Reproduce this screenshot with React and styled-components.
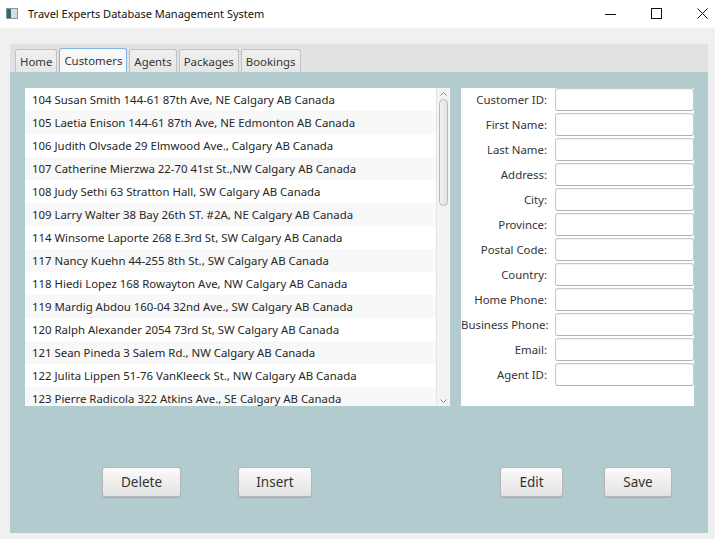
import React from 'react'
import styled, { createGlobalStyle } from 'styled-components'

const GlobalStyle = createGlobalStyle`
  html, body {
    margin: 0;
    padding: 0;
    background: #f0f0f0;
    font-family: 'Noto Sans', 'Open Sans', sans-serif;
    color: #333;
  }
`

const customers = [
  '104 Susan Smith 144-61 87th Ave, NE Calgary AB Canada',
  '105 Laetia Enison 144-61 87th Ave, NE Edmonton AB Canada',
  '106 Judith Olvsade 29 Elmwood Ave., Calgary AB Canada',
  '107 Catherine Mierzwa 22-70 41st St.,NW Calgary AB Canada',
  '108 Judy Sethi 63 Stratton Hall, SW Calgary AB Canada',
  '109 Larry Walter 38 Bay 26th ST. #2A, NE Calgary AB Canada',
  '114 Winsome Laporte 268 E.3rd St, SW Calgary AB Canada',
  '117 Nancy Kuehn 44-255 8th St., SW Calgary AB Canada',
  '118 Hiedi Lopez 168 Rowayton Ave, NW Calgary AB Canada',
  '119 Mardig Abdou 160-04 32nd Ave., SW Calgary AB Canada',
  '120 Ralph Alexander 2054 73rd St, SW Calgary AB Canada',
  '121 Sean Pineda 3 Salem Rd., NW Calgary AB Canada',
  '122 Julita Lippen 51-76 VanKleeck St., NW Calgary AB Canada',
  '123 Pierre Radicola 322 Atkins Ave., SE Calgary AB Canada',
]

const fields = [
  'Customer ID:', 'First Name:', 'Last Name:', 'Address:', 'City:', 'Province:',
  'Postal Code:', 'Country:', 'Home Phone:', 'Business Phone:', 'Email:', 'Agent ID:',
]

const tabs = ['Home', 'Customers', 'Agents', 'Packages', 'Bookings']

const Window = styled.div`
  width: 715px;
  height: 539px;
  display: flex;
  flex-direction: column;
  overflow: hidden;
`

const TitleBar = styled.div`
  height: 28px;
  box-sizing: border-box;
  padding: 0 0 2px 6px;
  background: #fff;
  display: flex;
  align-items: center;
`

const Title = styled.span`
  font-size: 11px;
  color: #111;
  margin-left: 10px;
  flex: 1;
`

const Controls = styled.div`
  display: flex;
  margin-right: -10px;
`

const WinButton = styled.div`
  width: 46px;
  height: 26px;
  display: flex;
  align-items: center;
  justify-content: center;
`

const Body = styled.div`
  flex: 1;
  display: flex;
  flex-direction: column;
  padding: 16px 7px 6px 10px;
`

const TabHeader = styled.div`
  height: 28px;
  background: #e2e2e2;
  display: flex;
  align-items: flex-end;
  padding-left: 5px;
  gap: 2px;
`

const Tab = styled.div`
  height: ${p => (p.active ? 24 : 23)}px;
  box-sizing: border-box;
  padding: 0 4px;
  display: flex;
  align-items: center;
  font-size: 11.4px;
  color: #333;
  border: 1px solid ${p => (p.active ? '#7fb6e6' : '#c2c2c2')};
  border-bottom: none;
  border-radius: 3px 3px 0 0;
  background: ${p => (p.active ? '#f7f7f7' : 'linear-gradient(#f0f0f0, #e6e6e6)')};
`

const Content = styled.div`
  flex: 1;
  background: #b2cbcf;
  display: flex;
  flex-direction: column;
  padding: 16px 14px 0 15px;
`

const TopRow = styled.div`
  display: flex;
  gap: 11px;
  height: 318px;
`

const ListBox = styled.div`
  width: 425px;
  display: flex;
  background: #fff;
  overflow: hidden;
`

const Rows = styled.div`
  flex: 1;
  overflow: hidden;
`

const Row = styled.div`
  height: 23px;
  line-height: 23px;
  padding-left: 7px;
  font-size: 11.4px;
  color: #262626;
  white-space: nowrap;
  background: ${p => (p.odd ? '#f8f8f8' : '#fff')};
`

const ScrollBar = styled.div`
  width: 13px;
  background: #f3f3f3;
  border-left: 1px solid #e6e6e6;
  display: flex;
  flex-direction: column;
  align-items: center;
`

const Arrow = styled.div`
  height: 11px;
  display: flex;
  align-items: center;
  justify-content: center;
`

const Thumb = styled.div`
  width: 9px;
  height: 107px;
  box-sizing: border-box;
  border: 1px solid #b9b9b9;
  border-radius: 5px;
  background: linear-gradient(to right, #f1f1f1, #e2e2e2);
`

const Track = styled.div`
  flex: 1;
`

const FormPanel = styled.div`
  width: 233px;
  background: #fff;
  display: flex;
  flex-direction: column;
  gap: 2px;
`

const FormRow = styled.div`
  display: grid;
  grid-template-columns: 86px 139px;
  column-gap: 8px;
  align-items: center;
`

const Label = styled.label`
  font-size: 11.4px;
  color: #333;
  text-align: right;
  white-space: nowrap;
`

const Input = styled.input`
  height: 23px;
  box-sizing: border-box;
  width: 139px;
  margin: 0;
  border: 1px solid #c8c8c8;
  border-bottom-color: #b0b0b0;
  border-radius: 3px;
  background: #fff;
  box-shadow: inset 0 1px 1px rgba(0, 0, 0, 0.05);
  outline: none;
`

const ButtonRow = styled.div`
  display: flex;
  margin-top: 61px;
  padding-left: 77px;
`

const Button = styled.button`
  width: ${p => p.w}px;
  height: 30px;
  margin-left: ${p => p.ml || 0}px;
  font-family: 'Noto Sans', 'Open Sans', sans-serif;
  font-size: 13.5px;
  color: #333;
  border: 1px solid #b6b6b6;
  border-radius: 3px;
  background: linear-gradient(#fafafa, #e3e3e3);
  box-shadow: 0 1px 1px rgba(0, 0, 0, 0.12);
  padding: 0;
`

const AppIcon = () => (
  <svg width="12" height="11" viewBox="0 0 12 11">
    <rect x="0.5" y="0.5" width="11" height="10" fill="#d7dde0" stroke="#8a979c" />
    <rect x="1" y="1" width="4" height="9" fill="#2f6670" />
  </svg>
)

export default function App() {
  return (
    <Window>
      <GlobalStyle />
      <TitleBar>
        <AppIcon />
        <Title>Travel Experts Database Management System</Title>
        <Controls>
          <WinButton>
            <svg width="11" height="11" viewBox="0 0 11 11">
              <line x1="0" y1="6.5" x2="11" y2="6.5" stroke="#111" strokeWidth="1" />
            </svg>
          </WinButton>
          <WinButton>
            <svg width="11" height="11" viewBox="0 0 11 11">
              <rect x="0.5" y="0.5" width="10" height="10" fill="none" stroke="#111" strokeWidth="1" />
            </svg>
          </WinButton>
          <WinButton>
            <svg width="11" height="11" viewBox="0 0 11 11">
              <path d="M0.5 0.5 L10.5 10.5 M10.5 0.5 L0.5 10.5" stroke="#111" strokeWidth="1" />
            </svg>
          </WinButton>
        </Controls>
      </TitleBar>
      <Body>
        <TabHeader>
          {tabs.map(t => (
            <Tab key={t} active={t === 'Customers'}>{t}</Tab>
          ))}
        </TabHeader>
        <Content>
          <TopRow>
            <ListBox>
              <Rows>
                {customers.map((c, i) => (
                  <Row key={c} odd={i % 2 === 1}>{c}</Row>
                ))}
              </Rows>
              <ScrollBar>
                <Arrow>
                  <svg width="7" height="4" viewBox="0 0 7 4">
                    <path d="M0.5 3.5 L3.5 0.5 L6.5 3.5" fill="none" stroke="#888" />
                  </svg>
                </Arrow>
                <Thumb />
                <Track />
                <Arrow>
                  <svg width="7" height="4" viewBox="0 0 7 4">
                    <path d="M0.5 0.5 L3.5 3.5 L6.5 0.5" fill="none" stroke="#888" />
                  </svg>
                </Arrow>
              </ScrollBar>
            </ListBox>
            <FormPanel>
              {fields.map(f => (
                <FormRow key={f}>
                  <Label>{f}</Label>
                  <Input />
                </FormRow>
              ))}
            </FormPanel>
          </TopRow>
          <ButtonRow>
            <Button w={79}>Delete</Button>
            <Button w={74} ml={57}>Insert</Button>
            <Button w={63} ml={188}>Edit</Button>
            <Button w={68} ml={41}>Save</Button>
          </ButtonRow>
        </Content>
      </Body>
    </Window>
  )
}
